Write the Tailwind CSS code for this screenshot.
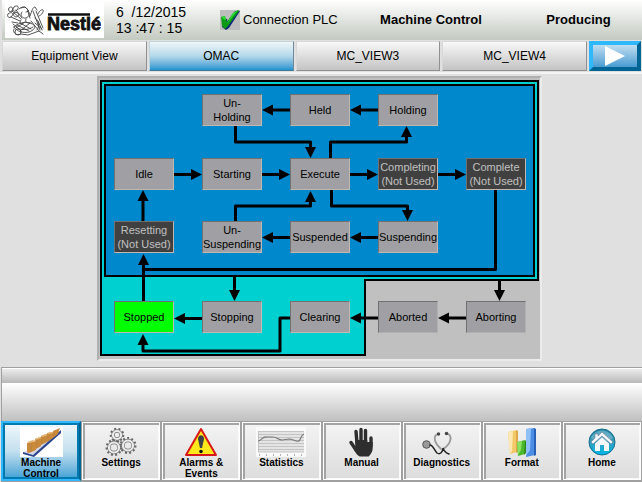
<!DOCTYPE html>
<html lang="en">
<head>
<meta charset="utf-8">
<title>Machine Control</title>
<script src="https://cdn.jsdelivr.net/npm/@tailwindcss/browser@4"></script>
</head>
<body class="flex min-h-screen flex-col bg-[#e0e0e0] font-['Liberation_Sans',Arial,sans-serif] text-black">

<header class="ml-[2px] grid h-10 grid-cols-[111fr_104fr_131fr_160fr_131fr] items-center bg-linear-to-b from-white to-[#c3cac0] pl-[3px] text-[13px]">
  <svg class="h-9 w-[99px]" viewBox="5 3 99 36" role="img" aria-label="Nestlé">
    <rect x="5" y="3" width="99" height="36" fill="#fff"/>
    <g fill="none" stroke="#444" stroke-width=".9" stroke-linecap="round" stroke-linejoin="round">
      <path d="M9 9c3-3 5 1 3 3s-5-1-3-3M14 8c3-3 6 0 3 3s-6 0-3-3M8 15c3-3 6-1 4 2s-6 1-4-2M14 14c3-2 6 1 4 3s-6 0-4-3"/>
      <path d="M12 12l9 8M16 11l6 8M11 18l9 4M19 10c4-4 9-2 9 3l2 6M21 9l4-1 4 4-3 1M22 13c-3 3 1 7 4 6s5-5 2-7"/>
      <path d="M30 17c2-6 3-9 5-9l2 3M33 12l7 19M36 12l7 17M38 15c1-3 4-5 5-4s-1 5-4 6M31 22l8 10M38 22l4 9M35 24l7 6"/>
      <path d="M14 28c5-5 15-7 21-1-1 8-16 9-21 1zM16 28c4 4 13 3 17 0M17 26l12 6M20 24l11 6M30 24l-10 8M25 23l-9 6M21 21c-2 3-1 4 2 4M26 20c-1 3 0 4 4 4"/>
      <circle cx="18" cy="33" r="3"/><path d="M14 30c-2 4 3 7 7 5l7 1 11-4 4 3M13 25l4 3M12 23l6 1M35 19c4 2 5 8 2 12"/>
    </g>
    <text x="47" y="31" font-family="Liberation Sans, Arial, sans-serif" font-size="18" font-weight="700" fill="#111" stroke="#111" stroke-width=".8">Nestlé</text>
    <path d="M48 15.500h42" stroke="#111" stroke-width="2.400"/>
  </svg>
  <div class="text-sm leading-4 whitespace-pre"><div>6  /12/2015</div><div>13 :47 : 15</div></div>
  <div class="flex items-center gap-[3px]">
    <svg class="h-5 w-5" viewBox="0 0 20 20" aria-hidden="true">
      <path fill="#bdbdbd" d="M0 0h20v20H0z"/>
      <path fill="#102a78" d="M2 8l5 1 1 4 7-12h5L9 18l-3 2-4-3z"/>
      <path fill="#0a9a14" d="M1 7l4-1 2 6 6-9 5-3 1 1L8 16l-3 3-3-3z"/>
      <path fill="#30e038" d="M2 7l3-1 1 4-3-1zM13 3l5-3-5 6-6 8z"/>
    </svg>
    <span>Connection PLC</span>
  </div>
  <h1 class="text-center font-bold">Machine Control</h1>
  <div class="pl-1 text-center font-bold">Producing</div>
</header>

<nav class="flex h-[34px] gap-[2px] border-b-2 border-[#f4f4f4] pt-[1px] pb-[1px] pl-[2px] text-xs" aria-label="Views">
  <button class="flex-1 border border-[#d8d8d8] border-r-[#909090] border-b-[#909090] bg-linear-to-b from-[#f8f8f8] to-[#c4c4c4]">Equipment View</button>
  <button class="flex-1 border border-[#c0d4dc] border-r-[#708898] border-b-[#407898] bg-linear-to-b from-[#f0f6f8] via-[#b4d8ea] to-[#1c94d0]" aria-current="page">OMAC</button>
  <button class="flex-1 border border-[#d8d8d8] border-r-[#909090] border-b-[#909090] bg-linear-to-b from-[#f8f8f8] to-[#c4c4c4]">MC_VIEW3</button>
  <button class="flex-1 border border-[#d8d8d8] border-r-[#909090] border-b-[#909090] bg-linear-to-b from-[#f8f8f8] to-[#c4c4c4]">MC_VIEW4</button>
  <button class="mr-[1px] flex w-[52px] items-center justify-center border-4 border-t-[#30b8ff] border-r-[#006494] border-b-[#006494] border-l-[#30b8ff] bg-linear-to-b from-[#d4eaf4] to-[#2890cc] bg-origin-border" aria-label="Next view">
    <svg class="h-5 w-5" viewBox="0 0 20 20"><path fill="#fff" d="M0 0l20 10L0 20z"/></svg>
  </button>
</nav>

<main class="flex flex-1 justify-center pt-[2px] pr-[3px]">
  <section class="relative h-[285px] w-[445px] border-2 border-t-[#b0b0b0] border-r-[#ececec] border-b-[#ececec] border-l-[#b0b0b0] bg-[#c0c0c0] text-[11px] leading-[14px]" aria-label="OMAC state diagram">
    <svg class="absolute -top-[2px] -left-[2px] h-[285px] w-[445px]" viewBox="97 76 445 285" aria-hidden="true">
      <defs>
        <marker id="head" markerUnits="userSpaceOnUse" markerWidth="12" markerHeight="12" refX="1" refY="6" orient="auto"><path d="M0 .5L11 6L0 11.500z"/></marker>
      </defs>
      <path d="M101 81H538V280H365V355H101Z" fill="#00d0d0" stroke="#000" stroke-width="2"/>
      <path d="M105 85H534V276H105Z" fill="#0088cc" stroke="#000" stroke-width="2"/>
      <g fill="none" stroke="#000" stroke-width="3" stroke-linejoin="round">
        <path d="M143.500 301V269.500H495.500V190"/>
        <g marker-end="url(#head)">
          <path d="M174 174.500H192"/><path d="M262 174.500H280"/><path d="M350 174.500H368"/><path d="M438 174.500H456"/>
          <path d="M378 110H360"/><path d="M290 110H272"/>
          <path d="M235.500 125V142H310.500V148"/>
          <path d="M330.500 158V142H406.500V136"/>
          <path d="M331.500 190V206H407.500V211"/>
          <path d="M235.500 221V206H310.500V201"/>
          <path d="M378 237.500H360"/><path d="M290 237.500H272"/>
          <path d="M143 221V200"/><path d="M143.500 280V264"/>
          <path d="M234.500 276V291"/><path d="M202 318.500H184"/>
          <path d="M290 318H280V351H143V344"/>
          <path d="M378 318H360"/><path d="M466 318H448"/><path d="M499.500 280V291"/>
        </g>
      </g>
    </svg>
    <div class="absolute top-4 left-[103px] flex h-8 w-[60px] items-center justify-center border border-t-[#707070] border-r-[#c0b8b0] border-b-[#c0b8b0] border-l-[#707070] bg-[#a0a0a4] text-center">Un-<br>Holding</div>
    <div class="absolute top-4 left-[191px] flex h-8 w-[60px] items-center justify-center border border-t-[#707070] border-r-[#c0b8b0] border-b-[#c0b8b0] border-l-[#707070] bg-[#a0a0a4]">Held</div>
    <div class="absolute top-4 left-[279px] flex h-8 w-[60px] items-center justify-center border border-t-[#707070] border-r-[#c0b8b0] border-b-[#c0b8b0] border-l-[#707070] bg-[#a0a0a4]">Holding</div>

    <div class="absolute top-20 left-[15px] flex h-8 w-[60px] items-center justify-center border border-t-[#707070] border-r-[#c0b8b0] border-b-[#c0b8b0] border-l-[#707070] bg-[#a0a0a4]">Idle</div>
    <div class="absolute top-20 left-[103px] flex h-8 w-[60px] items-center justify-center border border-t-[#707070] border-r-[#c0b8b0] border-b-[#c0b8b0] border-l-[#707070] bg-[#a0a0a4]">Starting</div>
    <div class="absolute top-20 left-[191px] flex h-8 w-[60px] items-center justify-center border border-t-[#707070] border-r-[#c0b8b0] border-b-[#c0b8b0] border-l-[#707070] bg-[#a0a0a4]">Execute</div>
    <div class="absolute top-20 left-[279px] flex h-8 w-[60px] items-center justify-center border border-t-[#707070] border-r-[#c0b8b0] border-b-[#c0b8b0] border-l-[#707070] bg-[#404040] text-center text-[#c0c0c0]">Completing<br>(Not Used)</div>
    <div class="absolute top-20 left-[367px] flex h-8 w-[60px] items-center justify-center border border-t-[#707070] border-r-[#c0b8b0] border-b-[#c0b8b0] border-l-[#707070] bg-[#404040] text-center text-[#c0c0c0]">Complete<br>(Not Used)</div>

    <div class="absolute top-[143px] left-[15px] flex h-8 w-[60px] items-center justify-center border border-t-[#707070] border-r-[#c0b8b0] border-b-[#c0b8b0] border-l-[#707070] bg-[#404040] text-center text-[#c0c0c0]">Resetting<br>(Not Used)</div>
    <div class="absolute top-[143px] left-[103px] flex h-8 w-[60px] items-center justify-center border border-t-[#707070] border-r-[#c0b8b0] border-b-[#c0b8b0] border-l-[#707070] bg-[#a0a0a4] text-center">Un-<br>Suspending</div>
    <div class="absolute top-[143px] left-[191px] flex h-8 w-[60px] items-center justify-center border border-t-[#707070] border-r-[#c0b8b0] border-b-[#c0b8b0] border-l-[#707070] bg-[#a0a0a4]">Suspended</div>
    <div class="absolute top-[143px] left-[279px] flex h-8 w-[60px] items-center justify-center border border-t-[#707070] border-r-[#c0b8b0] border-b-[#c0b8b0] border-l-[#707070] bg-[#a0a0a4]">Suspending</div>

    <div class="absolute top-[223px] left-[15px] flex h-8 w-[60px] items-center justify-center border border-t-[#707070] border-r-[#c0b8b0] border-b-[#c0b8b0] border-l-[#707070] bg-[#00ff00]">Stopped</div>
    <div class="absolute top-[223px] left-[103px] flex h-8 w-[60px] items-center justify-center border border-t-[#707070] border-r-[#c0b8b0] border-b-[#c0b8b0] border-l-[#707070] bg-[#a0a0a4]">Stopping</div>
    <div class="absolute top-[223px] left-[191px] flex h-8 w-[60px] items-center justify-center border border-t-[#707070] border-r-[#c0b8b0] border-b-[#c0b8b0] border-l-[#707070] bg-[#a0a0a4]">Clearing</div>
    <div class="absolute top-[223px] left-[279px] flex h-8 w-[60px] items-center justify-center border border-t-[#707070] border-r-[#b0b0b0] border-b-[#b0b0b0] border-l-[#707070] bg-[#a0a0a4]">Aborted</div>
    <div class="absolute top-[223px] left-[367px] flex h-8 w-[60px] items-center justify-center border border-t-[#707070] border-r-[#b0b0b0] border-b-[#b0b0b0] border-l-[#707070] bg-[#a0a0a4]">Aborting</div>
  </section>
</main>

<div class="ml-[1px] border-t border-l border-[#a0a0a0]">
  <div class="h-[15px] border-t border-white bg-linear-to-b from-[#ececec] to-[#b8b8b8]"></div>
  <div class="h-[38px] bg-linear-to-b from-white to-[#c0c0c0]"></div>
</div>

<nav class="ml-[1px] grid h-[61px] grid-cols-8 border-b border-[#a0a0a0] bg-[#a8a8a8] text-[10px] leading-[11px] font-bold" aria-label="Main menu">
  <button class="flex flex-col items-center border-2 border-t-[#30b8ff] border-r-[#006494] border-b-[#30b8ff] border-l-[#30b8ff] bg-linear-to-b from-[#f0f8fc] via-[#c4e0ee] to-[#38a0d4] pt-[4px] shadow-[inset_0_0_0_2px_#0078b0]" aria-current="page">
    <svg class="h-[30px] w-[43px]" viewBox="0 0 43 30" aria-hidden="true">
      <path fill="#fff" d="M0 0h43v30H0z"/>
      <path fill="#d4d8e4" d="M3 26L38 4l3 1-27 23z"/><path fill="#2c4690" d="M3 25l10 3L41 3v3L14 30 3 27z"/>
      <path fill="#c98a3c" d="M7 16l9-2v9l-7 3-2-1zM15 12l6-2v9l-5 3zM21 9l6-2v8l-6 3zM27 6l6-1v6l-6 4zM33 4l7-3-2 6-5 4z"/>
      <path fill="#e5b878" d="M7 15l6-2 3 1-7 2zM15 12l4-2 3 1-6 2zM21 9l4-2 3 1-6 2zM27 6l4-1 3 1-6 1z"/>
      <path fill="none" stroke="#a87438" stroke-width=".5" d="M11 16v9M17 13v8M22 10v7M28 7v6M34 5v5"/>
    </svg>
    <span>Machine<br>Control</span>
  </button>

  <button class="flex flex-col items-center border border-[#a0a0a0] bg-linear-to-b from-[#f4f4f4] to-[#dcdcdc] pt-[5px] shadow-[inset_0_0_0_1px_#ffffff,inset_3px_3px_0_0_#a4a4a4,inset_-2px_-2px_0_0_#fafafa]">
    <svg class="h-[30px] w-[32px]" viewBox="0 0 32 30" aria-hidden="true">
      <g fill="none">
        <g stroke="#666" stroke-dasharray="1.800 2.200" stroke-width="3"><circle cx="12" cy="8" r="5.800"/><circle cx="9" cy="20.500" r="7"/><circle cx="23" cy="18.500" r="7"/></g>
        <g stroke="#777" stroke-width="3.500"><circle cx="12" cy="8" r="4"/><circle cx="9" cy="20.500" r="5"/><circle cx="23" cy="18.500" r="5"/></g>
        <g stroke="#ececec" stroke-width="2.200"><circle cx="12" cy="8" r="4"/><circle cx="9" cy="20.500" r="5"/><circle cx="23" cy="18.500" r="5"/></g>
      </g>
    </svg>
    <span>Settings</span>
  </button>

  <button class="flex flex-col items-center border border-[#a0a0a0] bg-linear-to-b from-[#f4f4f4] to-[#dcdcdc] pt-[5px] shadow-[inset_0_0_0_1px_#ffffff,inset_3px_3px_0_0_#a4a4a4,inset_-2px_-2px_0_0_#fafafa]">
    <svg class="h-[30px] w-[34px]" viewBox="0 0 34 30" aria-hidden="true">
      <path fill="#ffe81c" stroke="#d81818" stroke-width="2" stroke-linejoin="round" d="M17 2L32 28H2z"/>
      <path fill="#3c4048" d="M14 12c0-5 6-5 6 0l-2 9h-2z"/><circle cx="17" cy="24.500" r="1.800" fill="#111"/>
    </svg>
    <span>Alarms &amp;<br>Events</span>
  </button>

  <button class="flex flex-col items-center border border-[#a0a0a0] bg-linear-to-b from-[#f4f4f4] to-[#dcdcdc] pt-[5px] shadow-[inset_0_0_0_1px_#ffffff,inset_3px_3px_0_0_#a4a4a4,inset_-2px_-2px_0_0_#fafafa]">
    <svg class="h-[30px] w-[50px]" viewBox="0 0 50 30" aria-hidden="true">
      <path fill="#fafafa" d="M0 0h50v30H0z"/><path fill="#e4e4e4" d="M2 4h46v21H2z"/>
      <path stroke="#bbb" stroke-width=".8" d="M2 4.500h46M2 7.500h46M2 10.500h46M2 13.500h46M2 16.500h46M2 19.500h46M2 22.500h46M2 25h46M2.500 4v21"/>
      <path fill="none" stroke="#777" stroke-width="1.100" d="M2 14c4 0 4-5 9-4l6 0c4 0 5 3 9 3l7-1c4 0 7 3 10 2 2-2 2-6 5-7"/>
      <path stroke="#999" stroke-dasharray="1 6" stroke-width="1.500" d="M3 28h44"/>
    </svg>
    <span>Statistics</span>
  </button>

  <button class="flex flex-col items-center border border-[#a0a0a0] bg-linear-to-b from-[#f4f4f4] to-[#dcdcdc] pt-[5px] shadow-[inset_0_0_0_1px_#ffffff,inset_3px_3px_0_0_#a4a4a4,inset_-2px_-2px_0_0_#fafafa]">
    <svg class="h-[30px] w-[28px]" viewBox="0 0 28 30" aria-hidden="true">
      <g stroke="#2e2e2e" stroke-width="3.400" stroke-linecap="round"><path d="M9 16L8 4.500M13 15V2.500M17.500 15V3.500M23 19V11M8 23L3 15.500"/></g>
      <path fill="#2e2e2e" d="M7.300 13h12v2h5.400v6c0 4-2 6-4 8.500h-9c-2-1-5-4-6-8l1.600-2z"/>
    </svg>
    <span>Manual</span>
  </button>

  <button class="flex flex-col items-center border border-[#a0a0a0] bg-linear-to-b from-[#f4f4f4] to-[#dcdcdc] pt-[5px] shadow-[inset_0_0_0_1px_#ffffff,inset_3px_3px_0_0_#a4a4a4,inset_-2px_-2px_0_0_#fafafa]">
    <svg class="h-[30px] w-[50px]" viewBox="0 0 50 30" aria-hidden="true">
      <circle cx="9.500" cy="17.500" r="3.800" fill="#999" stroke="#555"/>
      <g fill="none" stroke-linecap="round">
        <path stroke="#999" stroke-width="1.800" d="M21 7c-6 2-3 10 3 15M30 6.500c6 2 4 10-3 15"/>
        <path stroke="#222" stroke-width="1.500" d="M13 18c3 0 4 5 7 8 3 2 6-1 6-5 1 3 3 5 6 6"/>
      </g>
      <circle cx="21.500" cy="7" r="1.700" fill="#444"/><circle cx="29.500" cy="6.500" r="1.700" fill="#444"/>
    </svg>
    <span>Diagnostics</span>
  </button>

  <button class="flex flex-col items-center border border-[#a0a0a0] bg-linear-to-b from-[#f4f4f4] to-[#dcdcdc] pt-[5px] shadow-[inset_0_0_0_1px_#ffffff,inset_3px_3px_0_0_#a4a4a4,inset_-2px_-2px_0_0_#fafafa]">
    <svg class="h-[30px] w-[30px]" viewBox="0 0 30 30" aria-hidden="true">
      <path fill="#f3c868" d="M1 5l9-2v22l-7 2z"/><path fill="#fde8b4" d="M1 5l5-1-1 20-2 3z"/><path fill="#dca848" d="M9 3l2 1v21l-2 1z"/>
      <path fill="#4cb82c" d="M10 15l8-2v14l-7 2z"/><path fill="#8ce064" d="M10 15l5-1-1 9-3 5z"/><path fill="#2e8c18" d="M18 13l1 1v12l-2 2z"/>
      <path fill="#4c8ee4" d="M19 2l9-1v27l-9 2z"/><path fill="#90c0f8" d="M19 2l5-1-1 22-4 6z"/><path fill="#2860b8" d="M27 1l2 1v26l-2 1z"/>
    </svg>
    <span>Format</span>
  </button>

  <button class="flex flex-col items-center border border-[#a0a0a0] bg-linear-to-b from-[#f4f4f4] to-[#dcdcdc] pt-[5px] shadow-[inset_0_0_0_1px_#ffffff,inset_3px_3px_0_0_#a4a4a4,inset_-2px_-2px_0_0_#fafafa]">
    <svg class="h-[30px] w-[28px]" viewBox="0 0 28 30" aria-hidden="true">
      <defs><linearGradient id="ball" x2="0" y2="1"><stop offset="0" stop-color="#1c7c9c"/><stop offset=".45" stop-color="#3c9cb8"/><stop offset="1" stop-color="#00b8e8"/></linearGradient></defs>
      <circle cx="14" cy="15" r="13" fill="url(#ball)" stroke="#147090"/>
      <path fill="#8cc8d8" opacity=".55" d="M3 11C7 1 21 1 25 11c-6 4-15 4-22 0z"/>
      <path fill="#f4f8fa" stroke="#668" stroke-width=".5" d="M14 5l11 10-2 2-9-8-9 8-2-2 4-4V7h3v2z"/>
      <path fill="#f4f8fa" d="M7 16.500l7-6 7 6V24h-5v-6h-4v6H7z"/>
    </svg>
    <span>Home</span>
  </button>
</nav>
</body>
</html>
